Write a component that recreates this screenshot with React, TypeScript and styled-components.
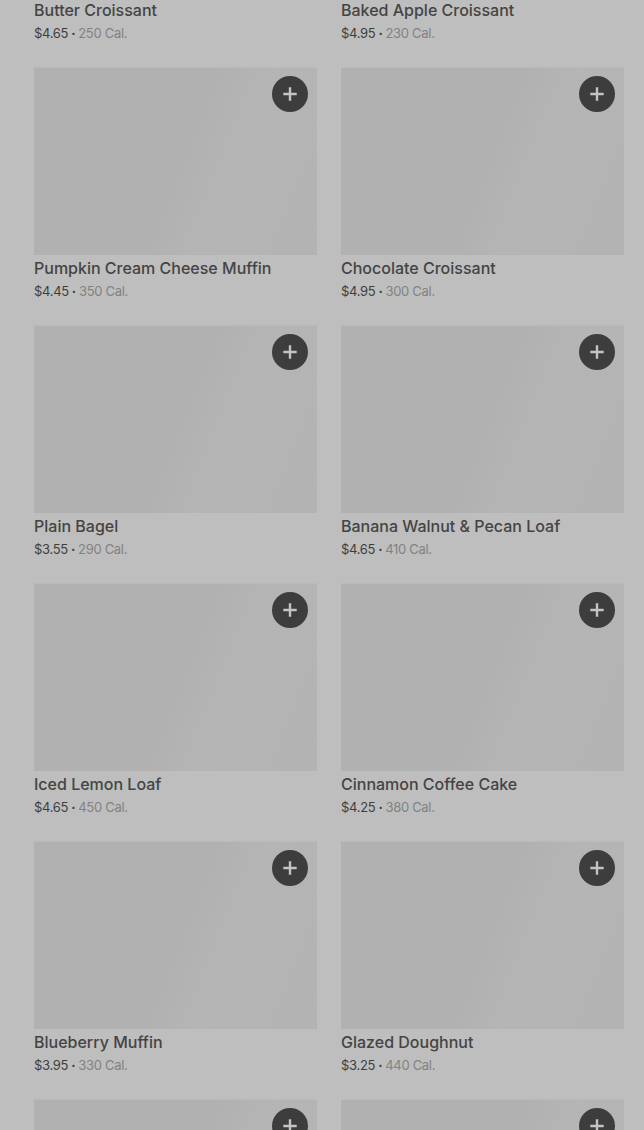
import React from "react";
import styled, { createGlobalStyle } from "styled-components";

const GlobalStyle = createGlobalStyle`
  html, body {
    margin: 0;
    padding: 0;
    background: #bebebe;
    overflow: hidden;
  }
  body {
    font-family: Inter, "Liberation Sans", sans-serif;
  }
`;

const Page = styled.div`
  width: 644px;
  height: 1130px;
  overflow: hidden;
  background: #bebebe;
`;

const Grid = styled.div`
  display: grid;
  grid-template-columns: 283px 283px;
  column-gap: 24px;
  row-gap: 25px;
  padding: 0 20px 0 34px;
  margin-top: -191px;
`;

const Card = styled.div`
  display: flex;
  flex-direction: column;
`;

const Thumb = styled.div`
  position: relative;
  height: 188px;
  background: linear-gradient(
    112deg,
    #b1b1b1 0%,
    #b1b1b1 52%,
    #b5b5b5 66%,
    #b3b3b3 100%
  );
  box-shadow: inset 0 1px 0 #b9b9b9;
`;

const AddButton = styled.button`
  position: absolute;
  top: 9px;
  right: 9px;
  width: 36px;
  height: 36px;
  border-radius: 50%;
  border: none;
  padding: 0;
  background: #3d3d3d;
  display: flex;
  align-items: center;
  justify-content: center;
  cursor: pointer;
`;

const Title = styled.div`
  margin-top: 3px;
  font-size: 16px;
  line-height: 20px;
  font-weight: 500;
  color: #444444;
  white-space: nowrap;
`;

const Meta = styled.div`
  margin-top: 4px;
  font-size: 13px;
  line-height: 18px;
  letter-spacing: -0.3px;
  color: #3e3e3e;
  white-space: nowrap;
`;

const Dot = styled.span`
  margin: 0 3px;
  font-weight: 700;
`;

const Cal = styled.span`
  color: #828282;
`;

const items = [
  { name: "Butter Croissant", price: "$4.65", cal: "250 Cal." },
  { name: "Baked Apple Croissant", price: "$4.95", cal: "230 Cal." },
  { name: "Pumpkin Cream Cheese Muffin", price: "$4.45", cal: "350 Cal." },
  { name: "Chocolate Croissant", price: "$4.95", cal: "300 Cal." },
  { name: "Plain Bagel", price: "$3.55", cal: "290 Cal." },
  { name: "Banana Walnut & Pecan Loaf", price: "$4.65", cal: "410 Cal." },
  { name: "Iced Lemon Loaf", price: "$4.65", cal: "450 Cal." },
  { name: "Cinnamon Coffee Cake", price: "$4.25", cal: "380 Cal." },
  { name: "Blueberry Muffin", price: "$3.95", cal: "330 Cal." },
  { name: "Glazed Doughnut", price: "$3.25", cal: "440 Cal." },
  { name: "", price: "", cal: "" },
  { name: "", price: "", cal: "" },
];

const PlusIcon = () => (
  <svg width="14" height="14" viewBox="0 0 14 14">
    <path
      d="M7 1.5v11M1.5 7h11"
      stroke="#c4c4c4"
      strokeWidth="2.4"
      strokeLinecap="square"
    />
  </svg>
);

const App = () => {
  return (
    <Page>
      <GlobalStyle />
      <Grid>
        {items.map((item, idx) => (
          <Card key={idx}>
            <Thumb>
              <AddButton aria-label="Add">
                <PlusIcon />
              </AddButton>
            </Thumb>
            {item.name && (
              <>
                <Title>{item.name}</Title>
                <Meta>
                  {item.price}
                  <Dot>·</Dot>
                  <Cal>{item.cal}</Cal>
                </Meta>
              </>
            )}
          </Card>
        ))}
      </Grid>
    </Page>
  );
};

export default App;
